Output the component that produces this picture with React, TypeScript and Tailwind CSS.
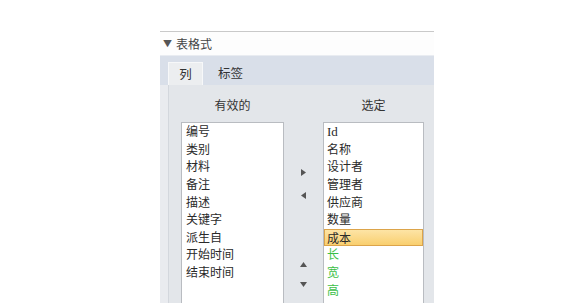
import React from "react";

const font = { fontFamily: '"Noto Sans CJK SC", "Noto Sans", sans-serif' };

const leftItems = ["编号", "类别", "材料", "备注", "描述", "关键字", "派生自", "开始时间", "结束时间"];
const rightItems: { t: string; green?: boolean; sel?: boolean }[] = [
  { t: "Id" },
  { t: "名称" },
  { t: "设计者" },
  { t: "管理者" },
  { t: "供应商" },
  { t: "数量" },
  { t: "成本", sel: true },
  { t: "长", green: true },
  { t: "宽", green: true },
  { t: "高", green: true },
];

function Tri({ dir }: { dir: "r" | "l" | "u" | "d" }) {
  const pts =
    dir === "r" ? "0,0 5,3.5 0,7" : dir === "l" ? "5,0 0,3.5 5,7" : dir === "u" ? "0,5 3.5,0 7,5" : "0,0 7,0 3.5,5";
  const w = dir === "r" || dir === "l" ? 5 : 7;
  const h = dir === "r" || dir === "l" ? 7 : 5;
  return (
    <svg width={w} height={h} viewBox={`0 0 ${w} ${h}`}>
      <polygon points={pts} fill="#555" />
    </svg>
  );
}

export default function App() {
  return (
    <div className="w-[588px] h-[303px] bg-white overflow-hidden" style={font}>
      <div className="ml-[160px] mt-[31px] w-[274px] border-t border-[#c9c9c9]">
        <div className="h-[23px] flex items-center pl-[3px] text-[12px] text-[#444] bg-[#fdfdfd]">
          <span className="text-[9px] mr-[4px] text-[#555]">▼</span>
          <span>表格式</span>
        </div>
        <div className="h-[30px] bg-[#d9dfe9] border-t border-[#e9ecf1] flex items-end pl-[8px] text-[12.5px] text-[#333]">
          <div className="w-[35px] h-[23px] bg-[#eceef0] border-t border-l border-r border-[#f7f8f9] flex items-center justify-center">
            列
          </div>
          <div className="h-[23px] flex items-center pl-[15px]">标签</div>
        </div>
        <div className="h-[219px] bg-[#e3e6ea] flex">
          <div className="w-[9px] bg-[#e9ebef] border-r border-[#d3d7dd]" />
          <div className="flex-1 flex pl-[12px]">
            <div className="w-[103px] flex flex-col">
              <div className="h-[37px] pt-[3px] flex items-center justify-center text-[12px] text-[#333]">有效的</div>
              <div className="flex-1 bg-white border border-[#b9bcc1] pl-[4px] text-[12px] text-[#2a2a2a]">
                {leftItems.map((t) => (
                  <div key={t} className="h-[17.65px] leading-[16px]">
                    {t}
                  </div>
                ))}
              </div>
            </div>
            <div className="w-[38px] flex flex-col items-center">
              <div className="h-[84px]" />
              <div className="flex flex-col items-center">
                <Tri dir="r" />
                <div className="h-[16px]" />
                <Tri dir="l" />
              </div>
              <div className="mt-[63px] flex flex-col items-center">
                <Tri dir="u" />
                <div className="h-[15px]" />
                <Tri dir="d" />
              </div>
            </div>
            <div className="w-[101px] ml-[1px] flex flex-col">
              <div className="h-[37px] pt-[3px] flex items-center justify-center text-[12px] text-[#333]">选定</div>
              <div className="flex-1 bg-white border border-[#b9bcc1] text-[12px] text-[#2a2a2a]">
                {rightItems.map((r) => (
                  <div
                    key={r.t}
                    className={
                      r.sel
                        ? "h-[17.65px] leading-[15px] pl-[2px] bg-gradient-to-b from-[#fde4a5] to-[#f9cf6e] border border-[#dca44a]"
                        : r.green
                        ? "h-[17.65px] leading-[16px] pl-[3px] text-[#3cbf48]"
                        : "h-[17.65px] leading-[16px] pl-[3px]"
                    }
                  >
                    {r.t === "Id" ? <span style={{ fontFamily: '"Liberation Serif", serif', fontSize: "13px" }}>Id</span> : r.t}
                  </div>
                ))}
              </div>
            </div>
          </div>
        </div>
      </div>
    </div>
  );
}
